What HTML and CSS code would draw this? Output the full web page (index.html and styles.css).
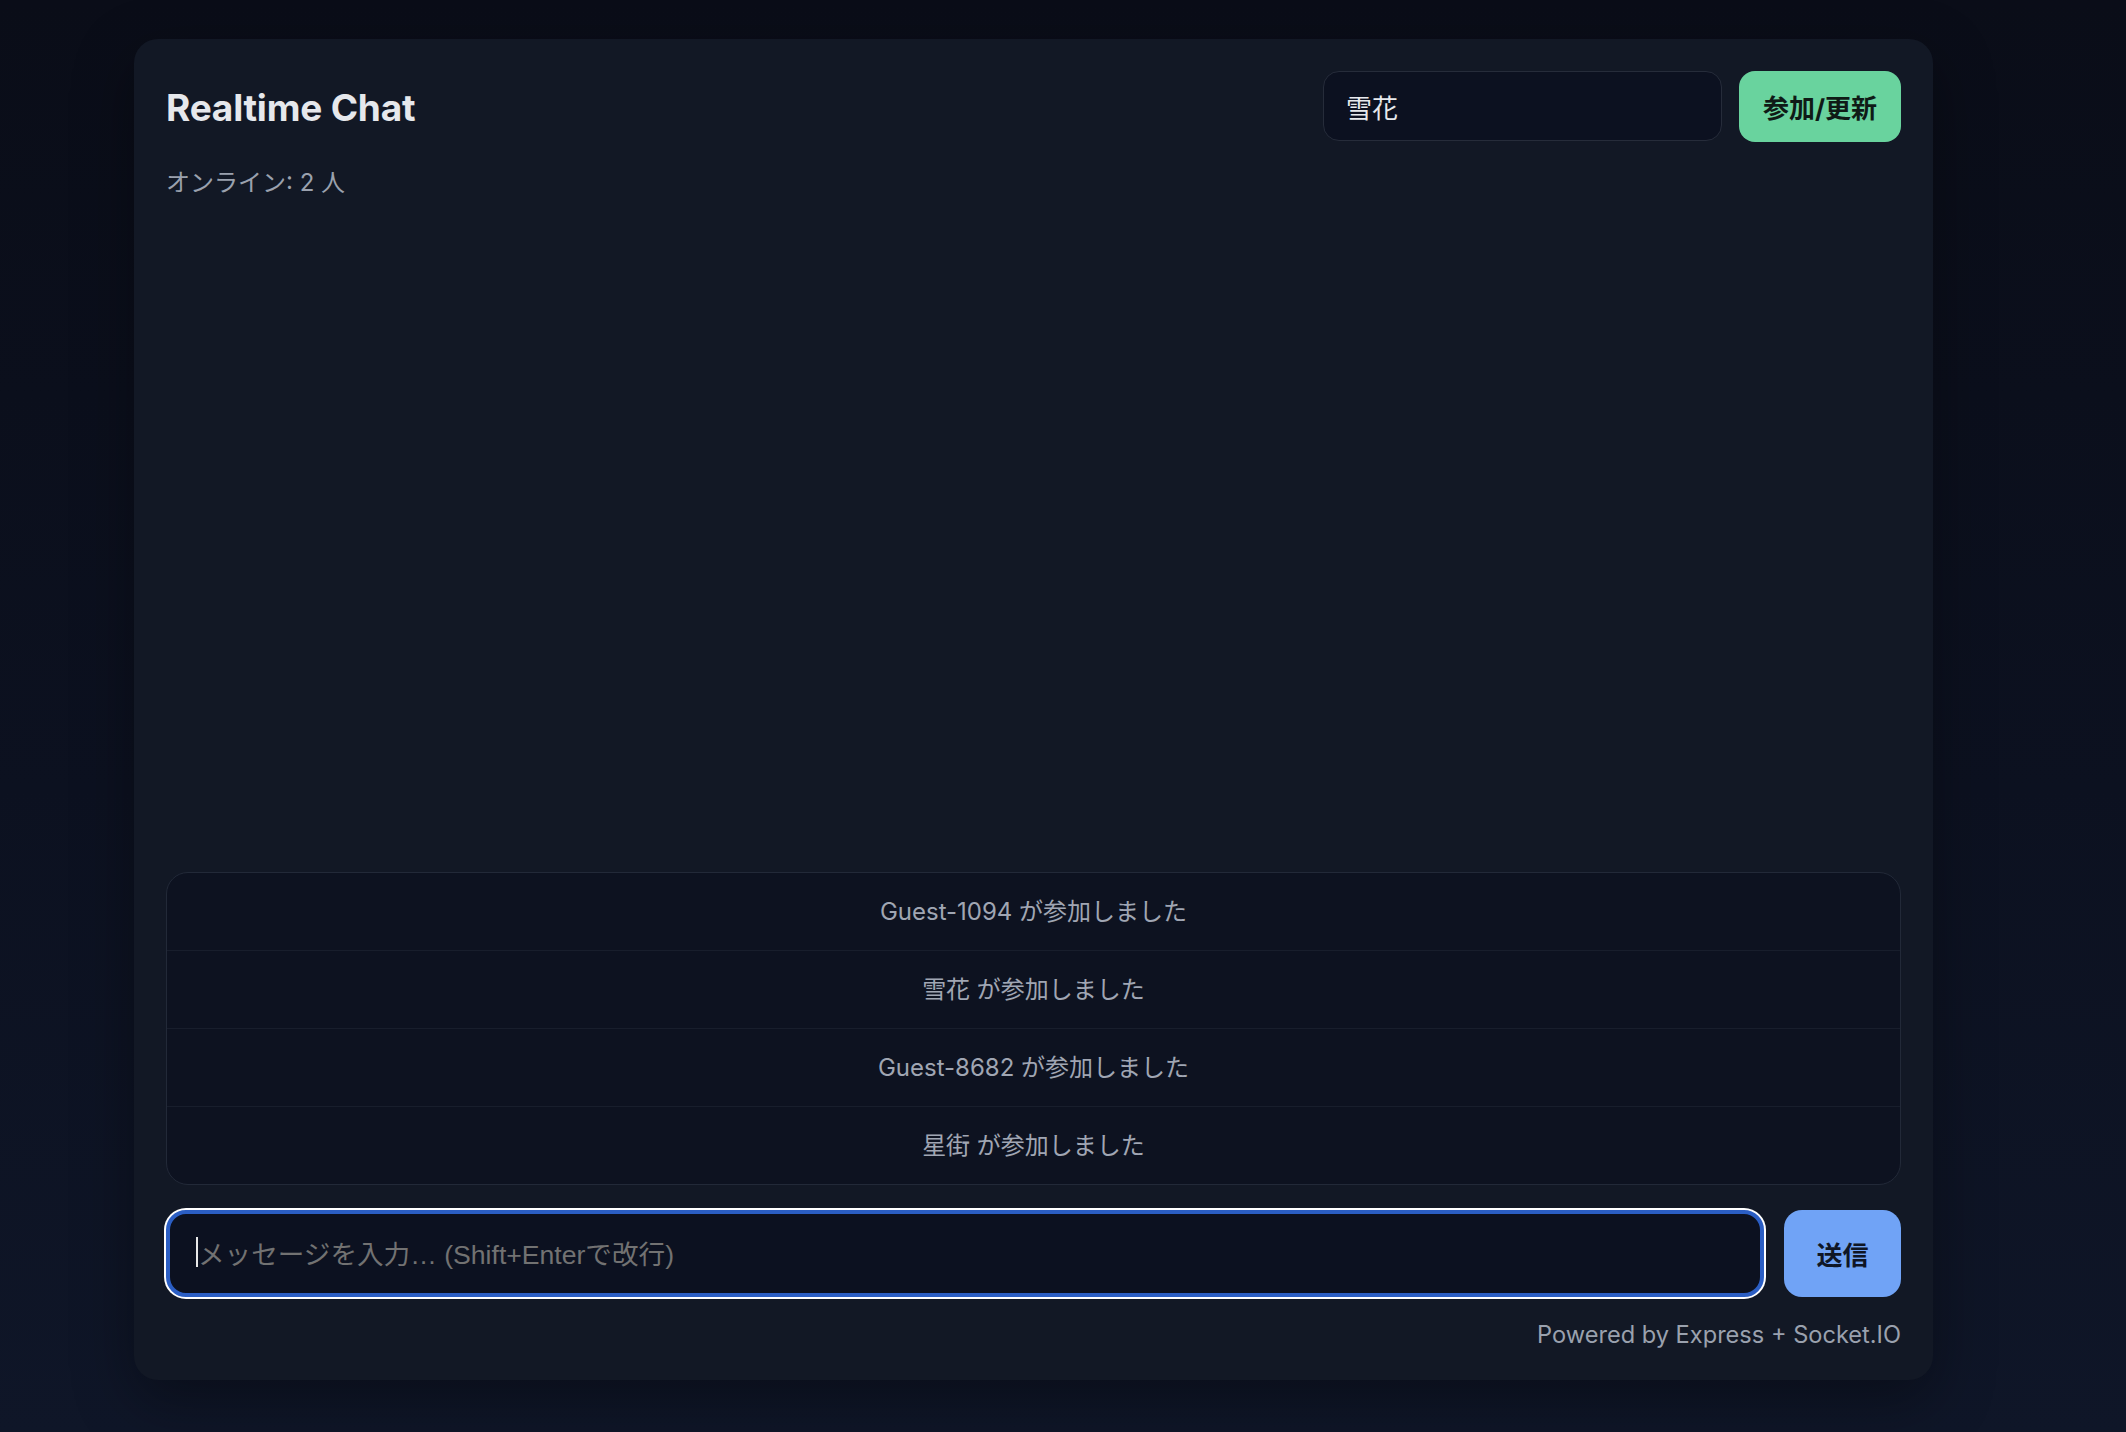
FILE: index.html
```html
<!DOCTYPE html>
<html lang="ja">
<head>
<meta charset="utf-8">
<title>Realtime Chat</title>
<link rel="stylesheet" href="styles.css">
</head>
<body>
  <main class="card">
    <header class="header">
      <h1 class="title">Realtime Chat</h1>
      <div class="join">
        <input class="name-input" type="text" value="雪花">
        <button class="join-btn">参加/更新</button>
      </div>
    </header>
    <div class="online">オンライン: 2 人</div>
    <section class="chat">
      <ul class="messages">
        <li class="sys">Guest-1094 が参加しました</li>
        <li class="sys">雪花 が参加しました</li>
        <li class="sys">Guest-8682 が参加しました</li>
        <li class="sys">星街 が参加しました</li>
      </ul>
    </section>
    <div class="composer">
      <div class="msg-box"><span class="caret"></span><span class="placeholder">メッセージを入力… (Shift+Enterで改行)</span></div>
      <button class="send-btn">送信</button>
    </div>
    <footer class="footer">Powered by Express + Socket.IO</footer>
  </main>
</body>
</html>
```

FILE: styles.css
```css
* { box-sizing: border-box; }

html, body {
  margin: 0;
  height: 100%;
}

body {
  background: linear-gradient(180deg, #0a0d18 0%, #0c1120 55%, #0f1628 100%);
  font-family: Inter, "Noto Sans CJK JP", sans-serif;
  padding: 39px 0 0 134px;
}

.card {
  width: 1799px;
  height: 1341px;
  background: #121825;
  border-radius: 24px;
  padding: 32px 32px 30px 32px;
  display: flex;
  flex-direction: column;
  box-shadow: 0 20px 60px rgba(0, 0, 0, 0.35);
}

.header {
  display: flex;
  align-items: center;
  justify-content: space-between;
  height: 70px;
}

.title {
  margin: 0;
  padding-top: 2px;
  font-size: 37px;
  font-weight: 700;
  color: #e6e8ec;
  letter-spacing: -0.2px;
}

.join {
  display: flex;
  align-items: center;
  gap: 17px;
}

.name-input {
  width: 399px;
  height: 70px;
  background: #0c1120;
  border: 1.5px solid #262c3a;
  border-radius: 16px;
  padding: 0 22px;
  color: #e8eaee;
  font-family: Inter, "Noto Sans CJK JP", sans-serif;
  font-size: 26px;
  outline: none;
}

.join-btn {
  height: 71px;
  padding: 0 24px;
  border: none;
  border-radius: 16px;
  background: #69d39e;
  color: #0f1a16;
  font-family: Inter, "Noto Sans CJK JP", sans-serif;
  font-size: 26px;
  font-weight: 700;
}

.online {
  margin-top: 24px;
  font-size: 24px;
  line-height: 36px;
  color: #9aa1ae;
}

.chat {
  flex: 1;
  display: flex;
  flex-direction: column;
  justify-content: flex-end;
}

.messages {
  list-style: none;
  margin: 0;
  padding: 0;
  border: 1.5px solid #222938;
  border-radius: 22px;
  background: #0d1220;
  overflow: hidden;
}

.sys {
  text-align: center;
  font-size: 24px;
  line-height: 36px;
  padding: 20.5px 16px;
  color: #a0a6b3;
  border-bottom: 1px solid #181e2c;
}

.sys:last-child { border-bottom: none; }

.composer {
  margin-top: 25px;
  display: flex;
  align-items: center;
  gap: 20px;
}

.msg-box {
  flex: 1;
  height: 87px;
  background: #0c1120;
  border: 4px solid #2b5ec4;
  border-radius: 20px;
  box-shadow: 0 0 0 2px #ffffff;
  padding: 0 0 3px 26px;
  display: flex;
  align-items: center;
  font-family: "Liberation Sans", "Noto Sans CJK JP", sans-serif;
  font-size: 26.6px;
}

.caret {
  width: 2px;
  height: 30px;
  background: #e8e8e8;
}

.placeholder {
  color: #727272;
}

.send-btn {
  width: 117px;
  height: 87px;
  border: none;
  border-radius: 18px;
  background: #70a3f6;
  color: #0f1626;
  font-family: Inter, "Noto Sans CJK JP", sans-serif;
  font-size: 26px;
  font-weight: 700;
}

.footer {
  margin-top: 23px;
  text-align: right;
  font-size: 23.6px;
  line-height: 30px;
  color: #9aa1ae;
}
```
